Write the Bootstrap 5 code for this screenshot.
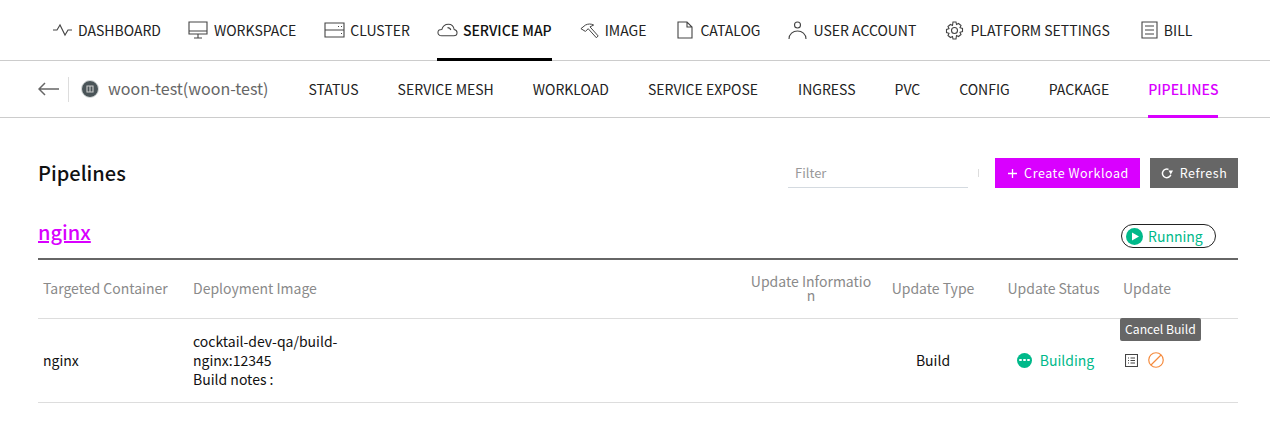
<!DOCTYPE html>
<html lang="en">
<head>
  <meta charset="UTF-8" />
  <title>Pipelines</title>
  <link href="https://cdn.jsdelivr.net/npm/bootstrap@5.3.0/dist/css/bootstrap.min.css" rel="stylesheet">
  <style>
    body { font-family: "Noto Sans CJK KR", "Noto Sans", sans-serif; color: #111; background: #fff; font-size: 14px; overflow: hidden; }
    svg { display: block; flex: none; fill: none; stroke: #444; stroke-width: 1.1; }
    .topbar { height: 61px; border-bottom: 1px solid #ccc; padding-left: 52px; }
    .topitem { height: 61px; margin-right: 28px; gap: 5px; color: #222; font-size: 14px; text-decoration: none; margin-bottom: -1px; border-bottom: 3px solid transparent; padding-top: 2px; }
    .topitem.is-on { border-bottom-color: #000; font-weight: 500; color: #111; }
    .topitem.gap-27 { margin-right: 27px; }
    .topitem.gap-29 { margin-right: 29px; }
    .topitem.gap-30 { margin-right: 30px; }
    .topitem.gap-31 { margin-right: 31px; }
    .subbar { height: 57px; border-bottom: 1px solid #ccc; padding-left: 38px; }
    .back-box { width: 31px; height: 25px; border-right: 1px solid #ddd; margin-right: 12px; }
    .ns-logo { width: 18px; height: 18px; border-radius: 50%; background: #4a5458; margin-right: 9px; border: 1px solid #d8dcdc; }
    .ns-name { color: #666; font-size: 16px; margin-right: 40px; line-height: 1; padding-bottom: 3px; }
    .subitem { height: 56px; margin-right: 39px; font-size: 14px; color: #222; text-decoration: none; margin-bottom: -1px; border-bottom: 3px solid transparent; padding-top: 3px; }
    .subitem.gap-40 { margin-right: 40px; }
    .subitem.is-on { color: #d900ff; border-bottom-color: #d900ff; font-weight: 500; }
    .page-body { padding: 40px 32px 0 38px; }
    .page-title { font-size: 20px; font-weight: 500; margin: 0; line-height: 30px; }
    .filter-box { width: 180px; height: 30px; border: 0; border-bottom: 1px solid #d4dae0; border-radius: 0; padding: 0 7px; font-size: 13px; box-shadow: none; }
    .filter-box::placeholder { color: #999; }
    .filter-sep { width: 1px; height: 8px; background: #ddd; margin: 0 16px 0 10px; }
    .act-btn { height: 30px; border: 0; border-radius: 0; color: #fff; font-size: 12.5px; letter-spacing: .55px; padding: 0; gap: 7px; }
    .act-create { width: 145px; background: #d900ff; margin-right: 10px; padding-left: 2px; }
    .act-refresh { width: 88px; background: #666; }
    .act-btn:hover { color: #fff; }
    .act-create:hover { background: #d900ff; }
    .act-refresh:hover { background: #666; }
    .wl-head { height: 44px; margin-top: 26px; padding-right: 22px; }
    .wl-name { color: #d900ff; font-size: 20px; font-weight: 500; line-height: 30px; margin-bottom: 8px; }
    .run-pill { width: 95px; height: 24px; border: 1px solid #222; border-radius: 12px; color: #00b98a; font-size: 14px; padding-left: 4px; gap: 5px; }
    .pipe-table { margin: 0; border-top: 2px solid #666; table-layout: fixed; width: 1200px; --bs-table-color: #111; }
    .pipe-table th { height: 59px; color: #8a8a8a; font-weight: 400; font-size: 14px; line-height: 14px; padding: 0 5px 2px; vertical-align: middle; border-bottom: 1px solid #ddd; word-break: break-all; }
    .pipe-table td { height: 84px; font-size: 14px; line-height: 19px; padding: 0 5px; vertical-align: middle; border-bottom: 1px solid #ddd; }
    .status-build { color: #00b98a; gap: 8px; padding-left: 4px; }
    .dot-ico { width: 15px; height: 15px; border-radius: 50%; background: #00b98a; gap: 1.5px; }
    .dot-ico i { width: 2.5px; height: 2.5px; border-radius: 50%; background: #fff; display: block; }
    .tip-box { position: absolute; left: -3px; top: -34px; background: #666; color: #fff; font-size: 12.2px; line-height: 23px; height: 23px; padding: 0 5px; border-radius: 2px; white-space: nowrap; }
    .update-icons { padding-left: 2px; gap: 10px; }
  </style>
</head>
<body>

<nav class="topbar d-flex align-items-stretch">
  <a class="topitem gap-27 d-flex align-items-center" href="#">
    <svg width="21" height="14" viewBox="0 0 21 14"><path d="M1 7h4l3-5 5 10 3-5h4"/></svg>DASHBOARD</a>
  <a class="topitem d-flex align-items-center" href="#">
    <svg width="21" height="20" viewBox="0 0 21 20"><path d="M1 2h18v12H1zM1 11h18M10 14v4M6 18h8"/></svg>WORKSPACE</a>
  <a class="topitem gap-27 d-flex align-items-center" href="#">
    <svg width="21" height="16" viewBox="0 0 21 16"><path d="M1 1h19v14H1zM1 8h19M14 4.500h1M17 4.500h1M17 11.500h1"/></svg>CLUSTER</a>
  <a class="topitem is-on d-flex align-items-center" href="#">
    <svg width="21" height="14" viewBox="0 0 22 14"><path d="M5 13C2 13 1 11 1 9.500S2.500 6.500 5 6.500C6 3 9 1 12 1c3.500 0 5.500 2.500 6 5.500 2 .5 3 1.500 3 3.300S19.500 13 17.500 13zM11 4.500c2 0 3 1 3.500 2.500"/></svg>SERVICE MAP</a>
  <a class="topitem gap-30 d-flex align-items-center" href="#">
    <svg width="20" height="17" viewBox="0 0 22 18"><path d="M1 7l5-4c3-1.500 6-1.500 9 0l-4 2 9 10-2 2-9-10-3 3z"/></svg>IMAGE</a>
  <a class="topitem gap-27 d-flex align-items-center" href="#">
    <svg width="19" height="18" viewBox="-1 0 19 18"><path d="M1 1h9l5 5v11H1zM10 1v5h5"/></svg>CATALOG</a>
  <a class="topitem gap-29 d-flex align-items-center" href="#">
    <svg width="21" height="18" viewBox="0 0 21 18"><circle cx="9.500" cy="4" r="3"/><path d="M1 18c0-5 4-8 8.500-8s8.500 3 8.500 8"/></svg>USER ACCOUNT</a>
  <a class="topitem gap-31 d-flex align-items-center" href="#">
    <svg width="20" height="19" viewBox="0 0 20 19"><circle cx="9.500" cy="9.500" r="3"/><path d="M8 1h3l.5 2.500 2-1 2.500 2-1 2.200 2.500.8v3l-2.500.8 1 2.200-2.500 2-2-1L11 18H8l-.5-2.500-2 1-2.500-2 1-2.200L1.500 11.500v-3L4 7.700l-1-2.200 2.500-2 2 1z"/></svg>PLATFORM SETTINGS</a>
  <a class="topitem d-flex align-items-center" href="#">
    <svg width="18" height="18" viewBox="0 0 18 18"><path d="M1 1h15v16H1zM4 5h9M4 9h9M4 13h9"/></svg>BILL</a>
</nav>

<nav class="subbar d-flex align-items-center">
  <div class="back-box d-flex align-items-center">
    <svg width="21" height="14" viewBox="0 0 21 14"><path d="M21 7H1M7 1L1 7l6 6" stroke="#666" stroke-width="1.500"/></svg>
  </div>
  <span class="ns-logo d-flex align-items-center justify-content-center">
    <svg width="8" height="8" viewBox="0 0 8 8"><path d="M1 1h6v6H1zM4 1v6" stroke="#ccc"/></svg>
  </span>
  <span class="ns-name">woon-test(woon-test)</span>
  <a class="subitem d-flex align-items-center" href="#">STATUS</a>
  <a class="subitem d-flex align-items-center" href="#">SERVICE MESH</a>
  <a class="subitem d-flex align-items-center" href="#">WORKLOAD</a>
  <a class="subitem gap-40 d-flex align-items-center" href="#">SERVICE EXPOSE</a>
  <a class="subitem d-flex align-items-center" href="#">INGRESS</a>
  <a class="subitem d-flex align-items-center" href="#">PVC</a>
  <a class="subitem d-flex align-items-center" href="#">CONFIG</a>
  <a class="subitem d-flex align-items-center" href="#">PACKAGE</a>
  <a class="subitem is-on d-flex align-items-center" href="#">PIPELINES</a>
</nav>

<main class="page-body">
  <div class="d-flex align-items-center justify-content-between">
    <h1 class="page-title">Pipelines</h1>
    <div class="d-flex align-items-center">
      <input class="form-control filter-box" type="text" placeholder="Filter">
      <span class="filter-sep"></span>
      <button class="btn act-btn act-create d-flex align-items-center justify-content-center" type="button">
        <svg width="9" height="9" viewBox="0 0 9 9"><path d="M4.500 0v9M0 4.500h9" stroke="#fff" stroke-width="1.300"/></svg>Create Workload</button>
      <button class="btn act-btn act-refresh d-flex align-items-center justify-content-center" type="button">
        <svg width="12" height="11" viewBox="0 0 12 11"><path d="M9.800 6.800A4.300 4.300 0 1 1 7.500 1.400" stroke="#fff" stroke-width="1.500"/><path d="M7.500 2.500h4.500L9.800 6.500z" fill="#fff" stroke="none"/></svg>Refresh</button>
    </div>
  </div>

  <div class="wl-head d-flex align-items-center justify-content-between">
    <a class="wl-name" href="#">nginx</a>
    <span class="run-pill d-flex align-items-center">
      <svg width="17" height="17" viewBox="0 0 17 17"><circle cx="8.500" cy="8.500" r="8.500" fill="#00b98a" stroke="none"/><path d="M6 4.500l7 4-7 4z" fill="#fff" stroke="none"/></svg>Running</span>
  </div>

  <table class="table pipe-table">
    <colgroup>
      <col width="150"><col width="557"><col width="132"><col width="112"><col width="129"><col width="120">
    </colgroup>
    <thead>
      <tr>
        <th>Targeted Container</th>
        <th>Deployment Image</th>
        <th class="text-center">Update Information</th>
        <th class="text-center">Update Type</th>
        <th class="text-center">Update Status</th>
        <th>Update</th>
      </tr>
    </thead>
    <tbody>
      <tr>
        <td>nginx</td>
        <td>cocktail-dev-qa/build-<br>nginx:12345<br>Build notes :</td>
        <td></td>
        <td class="text-center">Build</td>
        <td>
          <div class="status-build d-flex align-items-center justify-content-center">
            <span class="dot-ico d-flex align-items-center justify-content-center"><i></i><i></i><i></i></span>Building
          </div>
        </td>
        <td>
          <div class="update-icons position-relative d-flex align-items-center">
            <span class="tip-box">Cancel Build</span>
            <svg width="13" height="13" viewBox="0 0 13 13"><path d="M.5.500h12v12H.5zM3 4h1M5.500 4H10M3 6.500h1M5.500 6.500H10M3 9h1M5.500 9H10"/></svg>
            <svg width="16" height="16" viewBox="0 0 15 15"><circle cx="7.500" cy="7.500" r="6.800" stroke="#f58a3c"/><path d="M2.800 12.200l9.400-9.400" stroke="#f58a3c"/></svg>
          </div>
        </td>
      </tr>
    </tbody>
  </table>
</main>

<script src="https://cdn.jsdelivr.net/npm/bootstrap@5.3.0/dist/js/bootstrap.bundle.min.js"></script>
</body>
</html>
